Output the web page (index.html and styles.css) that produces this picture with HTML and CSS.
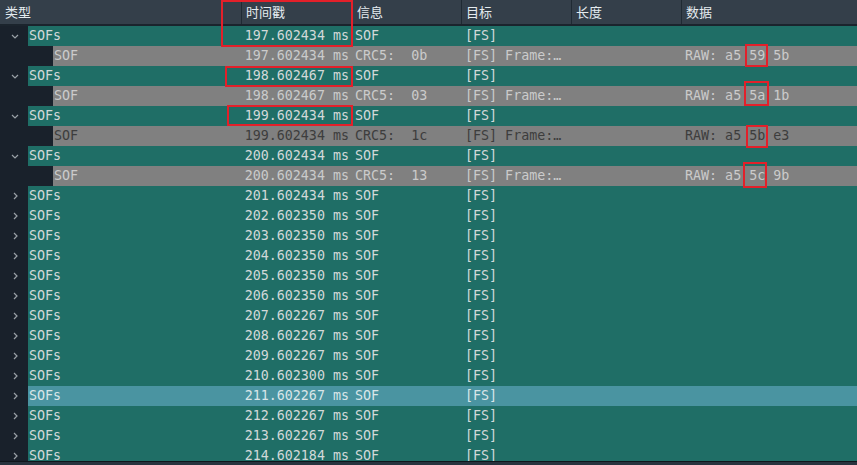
FILE: index.html
```html
<!DOCTYPE html>
<html lang="zh">
<head>
<meta charset="utf-8">
<title>SOF trace</title>
<link rel="stylesheet" href="styles.css">
</head>
<body>
<div class="view">
  <div class="header">
    <div class="hcell h1">类型</div>
    <div class="hcell">时间戳</div>
    <div class="hcell">信息</div>
    <div class="hcell">目标</div>
    <div class="hcell">长度</div>
    <div class="hcell last">数据</div>
  </div>
  <div class="rows">
    <div class="row parent"><div class="gutter"><svg class="chev" viewBox="0 0 8 5" width="8" height="5"><path d="M1 1l3 3 3-3" /></svg></div><div class="cells"><span class="name">SOFs</span><span class="ts">197.602434 ms</span><span class="info">SOF</span><span class="tgt">[FS]</span><span></span><span></span></div></div>
    <div class="row child"><div class="gutter"></div><div class="cells"><span class="name">SOF</span><span class="ts">197.602434 ms</span><span class="info">CRC5:  0b</span><span class="tgt">[FS] Frame:…</span><span></span><span class="data">RAW: a5 59 5b</span></div></div>
    <div class="row parent"><div class="gutter"><svg class="chev" viewBox="0 0 8 5" width="8" height="5"><path d="M1 1l3 3 3-3" /></svg></div><div class="cells"><span class="name">SOFs</span><span class="ts">198.602467 ms</span><span class="info">SOF</span><span class="tgt">[FS]</span><span></span><span></span></div></div>
    <div class="row child"><div class="gutter"></div><div class="cells"><span class="name">SOF</span><span class="ts">198.602467 ms</span><span class="info">CRC5:  03</span><span class="tgt">[FS] Frame:…</span><span></span><span class="data">RAW: a5 5a 1b</span></div></div>
    <div class="row parent"><div class="gutter"><svg class="chev" viewBox="0 0 8 5" width="8" height="5"><path d="M1 1l3 3 3-3" /></svg></div><div class="cells"><span class="name">SOFs</span><span class="ts">199.602434 ms</span><span class="info">SOF</span><span class="tgt">[FS]</span><span></span><span></span></div></div>
    <div class="row child dim"><div class="gutter"></div><div class="cells"><span class="name">SOF</span><span class="ts">199.602434 ms</span><span class="info">CRC5:  1c</span><span class="tgt">[FS] Frame:…</span><span></span><span class="data">RAW: a5 5b e3</span></div></div>
    <div class="row parent"><div class="gutter"><svg class="chev" viewBox="0 0 8 5" width="8" height="5"><path d="M1 1l3 3 3-3" /></svg></div><div class="cells"><span class="name">SOFs</span><span class="ts">200.602434 ms</span><span class="info">SOF</span><span class="tgt">[FS]</span><span></span><span></span></div></div>
    <div class="row child"><div class="gutter"></div><div class="cells"><span class="name">SOF</span><span class="ts">200.602434 ms</span><span class="info">CRC5:  13</span><span class="tgt">[FS] Frame:…</span><span></span><span class="data">RAW: a5 5c 9b</span></div></div>
    <div class="row parent"><div class="gutter"><svg class="chev" viewBox="0 0 5 8" width="5" height="8"><path d="M1 1l3 3-3 3" /></svg></div><div class="cells"><span class="name">SOFs</span><span class="ts">201.602434 ms</span><span class="info">SOF</span><span class="tgt">[FS]</span><span></span><span></span></div></div>
    <div class="row parent"><div class="gutter"><svg class="chev" viewBox="0 0 5 8" width="5" height="8"><path d="M1 1l3 3-3 3" /></svg></div><div class="cells"><span class="name">SOFs</span><span class="ts">202.602350 ms</span><span class="info">SOF</span><span class="tgt">[FS]</span><span></span><span></span></div></div>
    <div class="row parent"><div class="gutter"><svg class="chev" viewBox="0 0 5 8" width="5" height="8"><path d="M1 1l3 3-3 3" /></svg></div><div class="cells"><span class="name">SOFs</span><span class="ts">203.602350 ms</span><span class="info">SOF</span><span class="tgt">[FS]</span><span></span><span></span></div></div>
    <div class="row parent"><div class="gutter"><svg class="chev" viewBox="0 0 5 8" width="5" height="8"><path d="M1 1l3 3-3 3" /></svg></div><div class="cells"><span class="name">SOFs</span><span class="ts">204.602350 ms</span><span class="info">SOF</span><span class="tgt">[FS]</span><span></span><span></span></div></div>
    <div class="row parent"><div class="gutter"><svg class="chev" viewBox="0 0 5 8" width="5" height="8"><path d="M1 1l3 3-3 3" /></svg></div><div class="cells"><span class="name">SOFs</span><span class="ts">205.602350 ms</span><span class="info">SOF</span><span class="tgt">[FS]</span><span></span><span></span></div></div>
    <div class="row parent"><div class="gutter"><svg class="chev" viewBox="0 0 5 8" width="5" height="8"><path d="M1 1l3 3-3 3" /></svg></div><div class="cells"><span class="name">SOFs</span><span class="ts">206.602350 ms</span><span class="info">SOF</span><span class="tgt">[FS]</span><span></span><span></span></div></div>
    <div class="row parent"><div class="gutter"><svg class="chev" viewBox="0 0 5 8" width="5" height="8"><path d="M1 1l3 3-3 3" /></svg></div><div class="cells"><span class="name">SOFs</span><span class="ts">207.602267 ms</span><span class="info">SOF</span><span class="tgt">[FS]</span><span></span><span></span></div></div>
    <div class="row parent"><div class="gutter"><svg class="chev" viewBox="0 0 5 8" width="5" height="8"><path d="M1 1l3 3-3 3" /></svg></div><div class="cells"><span class="name">SOFs</span><span class="ts">208.602267 ms</span><span class="info">SOF</span><span class="tgt">[FS]</span><span></span><span></span></div></div>
    <div class="row parent"><div class="gutter"><svg class="chev" viewBox="0 0 5 8" width="5" height="8"><path d="M1 1l3 3-3 3" /></svg></div><div class="cells"><span class="name">SOFs</span><span class="ts">209.602267 ms</span><span class="info">SOF</span><span class="tgt">[FS]</span><span></span><span></span></div></div>
    <div class="row parent"><div class="gutter"><svg class="chev" viewBox="0 0 5 8" width="5" height="8"><path d="M1 1l3 3-3 3" /></svg></div><div class="cells"><span class="name">SOFs</span><span class="ts">210.602300 ms</span><span class="info">SOF</span><span class="tgt">[FS]</span><span></span><span></span></div></div>
    <div class="row parent hover"><div class="gutter"><svg class="chev" viewBox="0 0 5 8" width="5" height="8"><path d="M1 1l3 3-3 3" /></svg></div><div class="cells"><span class="name">SOFs</span><span class="ts">211.602267 ms</span><span class="info">SOF</span><span class="tgt">[FS]</span><span></span><span></span></div></div>
    <div class="row parent"><div class="gutter"><svg class="chev" viewBox="0 0 5 8" width="5" height="8"><path d="M1 1l3 3-3 3" /></svg></div><div class="cells"><span class="name">SOFs</span><span class="ts">212.602267 ms</span><span class="info">SOF</span><span class="tgt">[FS]</span><span></span><span></span></div></div>
    <div class="row parent"><div class="gutter"><svg class="chev" viewBox="0 0 5 8" width="5" height="8"><path d="M1 1l3 3-3 3" /></svg></div><div class="cells"><span class="name">SOFs</span><span class="ts">213.602267 ms</span><span class="info">SOF</span><span class="tgt">[FS]</span><span></span><span></span></div></div>
    <div class="row parent"><div class="gutter"><svg class="chev" viewBox="0 0 5 8" width="5" height="8"><path d="M1 1l3 3-3 3" /></svg></div><div class="cells"><span class="name">SOFs</span><span class="ts">214.602184 ms</span><span class="info">SOF</span><span class="tgt">[FS]</span><span></span><span></span></div></div>
  </div>
  <div class="box box-head"></div>
  <div class="box box-ts2"></div>
  <div class="box box-ts3"></div>
  <div class="box box-b1"></div>
  <div class="box box-b2"></div>
  <div class="box box-b3"></div>
  <div class="box box-b4"></div>
</div>
<div class="footer"></div>
</body>
</html>
```
FILE: styles.css
```css
html, body {
  margin: 0;
  padding: 0;
  background: #19212b;
  width: 857px;
  height: 465px;
  overflow: hidden;
}

.view {
  position: relative;
  height: 461px;
  overflow: hidden;
  background: #19212b;
}

.header {
  display: grid;
  grid-template-columns: 242px 111px 109px 110px 110px 1fr;
  height: 24px;
  background: #343f4a;
  border-bottom: 2px solid #1b242d;
  font-family: "Noto Sans CJK SC", "Noto Sans", sans-serif;
  font-size: 13px;
  color: #e4ebef;
}

.hcell {
  line-height: 24px;
  padding-left: 4px;
  border-right: 1px solid #1f2a33;
}
.hcell.h1 { padding-left: 5px; }
.hcell.last { border-right: none; }

.rows {
  font-family: "DejaVu Sans Mono", "Liberation Mono", monospace;
  font-size: 13.33px;
}

.row {
  display: flex;
  height: 20px;
  line-height: 20px;
}

.gutter {
  flex: none;
  width: 28px;
  display: flex;
  align-items: center;
  justify-content: center;
  background: #19212b;
}
.parent .gutter { padding-left: 2px; box-sizing: border-box; }
.child .gutter { width: 53px; }

.chev {
  display: block;
  fill: none;
  stroke: #9aa1a7;
  stroke-width: 1.2;
}

.cells {
  flex: 1;
  display: grid;
  grid-template-columns: 214px 111px 109px 110px 110px 1fr;
  background: #1f6e66;
  color: #d2d9d9;
  overflow: hidden;
}
.child .cells {
  grid-template-columns: 189px 111px 109px 110px 110px 1fr;
  background: #808080;
  color: #cbcbcb;
}
.child.dim .cells { color: #3d3d3d; }
.hover .cells { background: #4a94a1; color: #d9e6e9; }

.cells span { overflow: hidden; white-space: pre; }
.name { padding-left: 1px; }
.ts { text-align: right; padding-right: 4px; }
.info { padding-left: 2px; }
.tgt { padding-left: 3px; }
.data { padding-left: 3px; }

.box {
  position: absolute;
  border: 2px solid #e3202a;
  box-sizing: border-box;
}
.box-head { left: 221px; top: 0; width: 132px; height: 47px; }
.box-ts2 { left: 225px; top: 66px; width: 128px; height: 21px; }
.box-ts3 { left: 227px; top: 105px; width: 126px; height: 21px; }
.box-b1 { left: 745px; top: 44px; width: 23px; height: 23px; }
.box-b2 { left: 744px; top: 81px; width: 25px; height: 25px; }
.box-b3 { left: 746px; top: 125px; width: 22px; height: 23px; }
.box-b4 { left: 743px; top: 162px; width: 24px; height: 26px; }

.footer {
  height: 3px;
  border-top: 1px solid #10161c;
  background: #28333e;
}
```
